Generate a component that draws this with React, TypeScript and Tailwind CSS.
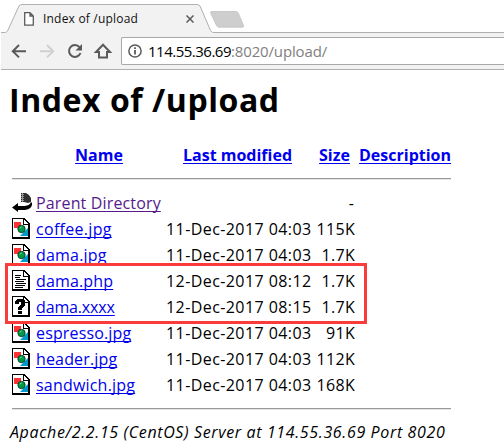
import React from "react";

type Kind = "image" | "text" | "unknown";
type Entry = { name: string; kind: Kind; date: string; size: string; fit: string };

const before: Entry[] = [
  { name: "coffee.jpg", kind: "image", date: "11-Dec-2017 04:03", size: "115K", fit: "tracking-[0.3px]" },
  { name: "dama.jpg", kind: "image", date: "11-Dec-2017 04:03", size: "1.7K", fit: "tracking-[0.2px]" },
];
const marked: Entry[] = [
  { name: "dama.php", kind: "text", date: "12-Dec-2017 08:12", size: "1.7K", fit: "tracking-[0.15px]" },
  { name: "dama.xxxx", kind: "unknown", date: "12-Dec-2017 08:15", size: "1.7K", fit: "tracking-[-0.15px]" },
];
const after: Entry[] = [
  { name: "espresso.jpg", kind: "image", date: "11-Dec-2017 04:03", size: "91K", fit: "tracking-[0.15px]" },
  { name: "header.jpg", kind: "image", date: "11-Dec-2017 04:03", size: "112K", fit: "tracking-[0.15px]" },
  { name: "sandwich.jpg", kind: "image", date: "11-Dec-2017 04:03", size: "168K", fit: "tracking-[0.2px]" },
];

function FileIcon({ kind }: { kind: Kind }) {
  return (
    <svg width="20" height="22" viewBox="0 0 20 22" shapeRendering="crispEdges" className="block shrink-0">
      <path d="M0 0h12l6 6v15H0z" fill="#000" />
      <path d="M1 1h10v6h5v12H1z" fill="#fff" />
      <path d="M12 2l4 4h-4z" fill="#fff" />
      {kind === "image" && (
        <g shapeRendering="auto">
          <rect x="2" y="4" width="7" height="6" fill="#ff3333" />
          <path d="M16 10v8H8z" fill="#0099cc" />
          <circle cx="9.5" cy="11" r="3.7" fill="#009944" stroke="#003322" strokeWidth="0.8" />
          <path d="M7.8 10.2l1.8-1.2" stroke="#99ddbb" />
        </g>
      )}
      {kind === "text" && (
        <path d="M3 5.5h6M3 7.5h5M4 9.5h10M3 11.5h9M4 13.5h10M3 15.5h10M3 17.5h8" stroke="#000" />
      )}
      {kind === "unknown" && (
        <g>
          <path d="M3 5l2-2h6l2 2v5l-3 2v2H6v-3l3-2V6H7v2H3z" fill="#000" />
          <path d="M6 15h4v3H6z" fill="#000" />
        </g>
      )}
    </svg>
  );
}

function BackIcon() {
  return (
    <svg width="21" height="22" viewBox="0 0 21 22" className="block shrink-0">
      <path d="M9 1h3v9H9z" fill="#999" />
      <path d="M9.5 1v9M11.5 1v9" stroke="#222" strokeDasharray="1 1" />
      <path d="M12 1h2l3 2 2 3v4l-3 1-4-1z" fill="#303030" />
      <path d="M0 15.500L6 11v3h5c4 0 7-1 8-4l1 1v2c-1 4-5 5-9 5H6v2z" fill="#000" />
    </svg>
  );
}

function Row({ e }: { e: Entry }) {
  return (
    <div className="flex h-[26px] items-center text-[16px] leading-[26px]">
      <FileIcon kind={e.kind} />
      <div className="ml-1 w-[130px] whitespace-nowrap">
        <a className={"text-[#0000ee] underline underline-offset-2 [text-decoration-skip-ink:none] " + e.fit}>{e.name}</a>
      </div>
      <div className="w-[145px] whitespace-nowrap tracking-[0.42px]">{e.date}</div>
      <div className="w-[44px] whitespace-nowrap text-right tracking-[0.3px]">{e.size}</div>
    </div>
  );
}

function Browser() {
  return (
    <header className="h-[70px] font-['Open_Sans',sans-serif]">
      <div className="relative h-[32px]">
        <svg width="504" height="33" viewBox="0 0 504 33" className="absolute left-0 top-0">
          <path d="M1 33V32.5H5.5L7.5 31L19 6Q20 4.5 22 4.5H197Q199 4.5 200 6L210.5 30.5Q211.5 32.5 213.5 32.5V33z" fill="#f2f2f2" />
          <path d="M1 32.5H5.5L7.5 31L19 6Q20 4.5 22 4.5H197Q199 4.5 200 6L210.5 30.5Q211.5 32.5 213.5 32.5H504" fill="none" stroke="#b0b0b0" />
          <path d="M211.5 11.5H236Q237.5 11.5 238.2 13L243.6 25.5Q244 27.2 242.5 27.2H219Q217.3 27.2 216.5 25.5L210.6 13Q210.2 11.5 211.5 11.5z" fill="#cecece" stroke="#c0c0c0" strokeWidth="0.8" />
        </svg>
        <div className="relative flex h-[32px] items-center pl-6 pt-[5px]">
          <svg width="10" height="14" viewBox="0 0 10 14" fill="#fff" stroke="#5a5a5a" strokeWidth="1.3">
            <path d="M.7.7H6l3.3 3.3v9.2H.7zM6 .7V4h3.3" />
          </svg>
          <span className="ml-[9px] w-[143px] whitespace-nowrap text-[12px] leading-4 tracking-[0.2px] text-[#111]">Index of /upload</span>
          <svg width="8" height="8" viewBox="0 0 8 8" stroke="#5a5a5a" strokeWidth="1.5">
            <path d="M.5.5l7 7M7.5.5l-7 7" />
          </svg>
        </div>
      </div>
      <div className="ml-px flex h-[38px] border-b border-[#b0b0b0] bg-[#f2f2f2] pt-[5px]">
        <svg width="120" height="28" viewBox="1 37 120 28" fill="none" stroke="#5a5a5a" strokeWidth="2" className="shrink-0">
          <path d="M26 51.2H13.5M19 45l-6.2 6.2 6.2 6.2" />
          <path d="M40 51.2h12.5M47 45l6.2 6.2-6.2 6.2" stroke="#d0d0d0" />
          <path d="M79.5 47.2A5.9 5.9 0 1 0 80.5 53" />
          <path d="M82 44v6.5h-6.5z" fill="#5a5a5a" stroke="none" />
          <path d="M96 52h3v5.5h8V52h3l-7-7.2z" />
        </svg>
        <div className="flex h-[28px] flex-1 items-center rounded-l-[2px] border border-r-0 border-[#a9a9a9] bg-white pl-[6px]">
          <svg width="14" height="14" viewBox="0 0 14 14" fill="none" stroke="#5a5a5a" strokeWidth="1.5">
            <circle cx="7" cy="7" r="6.1" />
            <path d="M7 6v4.5M7 3.3v1.6" strokeWidth="1.8" />
          </svg>
          <span className="ml-[6px] whitespace-nowrap text-[15px] leading-5 tracking-[-0.1px] text-black">
            <span className="tracking-[-0.5px]">114.55.36.69</span><span className="tracking-[-0.15px] text-[#808080]">:8020/upload/</span>
          </span>
        </div>
      </div>
    </header>
  );
}

export default function App() {
  const head = "text-[#0000ee] underline underline-offset-2 [text-decoration-skip-ink:none]";
  return (
    <div className="h-[446px] w-[504px] overflow-hidden bg-white text-black">
      <Browser />
      <main className="pl-3 font-['Open_Sans',sans-serif]">
        <h1 className="-ml-[3px] h-[72px] whitespace-nowrap pt-[8px] text-[32px] font-bold leading-[44px] tracking-[0.55px]">Index of /upload</h1>
        <div className="flex h-[26px] items-center whitespace-nowrap text-[16px] font-bold leading-[26px]">
          <div className="ml-[24px] w-[126px] text-center"><a className={head}>Name</a></div>
          <div className="ml-[3px] w-[145px] text-center"><a className={head}>Last modified</a></div>
          <div className="w-[40px] text-right"><a className={head}>Size</a></div>
          <div className="ml-[9px]"><a className={head}>Description</a></div>
        </div>
        <hr className="mt-[10px] h-[2px] w-[439px] border-0 border-t border-[#999] bg-[#e5e5e5]" />
        <div className="mt-[10px]">
          <div className="flex h-[26px] items-center text-[16px] leading-[26px]">
            <BackIcon />
            <a className="ml-[3px] w-[300px] whitespace-nowrap text-[#551a8b]"><span className="tracking-[0.15px] underline underline-offset-2 [text-decoration-skip-ink:none]">Parent Directory</span></a>
            <span className="w-[18px] text-right">-</span>
          </div>
          {before.map((e) => <Row key={e.name} e={e} />)}
          <div className="relative">
            {marked.map((e) => <Row key={e.name} e={e} />)}
            <div className="absolute -left-[7px] -top-[5px] h-[61px] w-[362px] border-[3px] border-[#fb3a3a]" />
          </div>
          {after.map((e) => <Row key={e.name} e={e} />)}
        </div>
        <hr className="mt-[10px] h-[2px] w-[439px] border-0 border-t border-[#999] bg-[#e5e5e5]" />
        <address className="-ml-[2px] mt-[9px] whitespace-nowrap text-[16px] italic leading-[26px] tracking-[0.63px]">Apache/2.2.15 (CentOS) Server at 114.55.36.69 Port 8020</address>
      </main>
    </div>
  );
}
